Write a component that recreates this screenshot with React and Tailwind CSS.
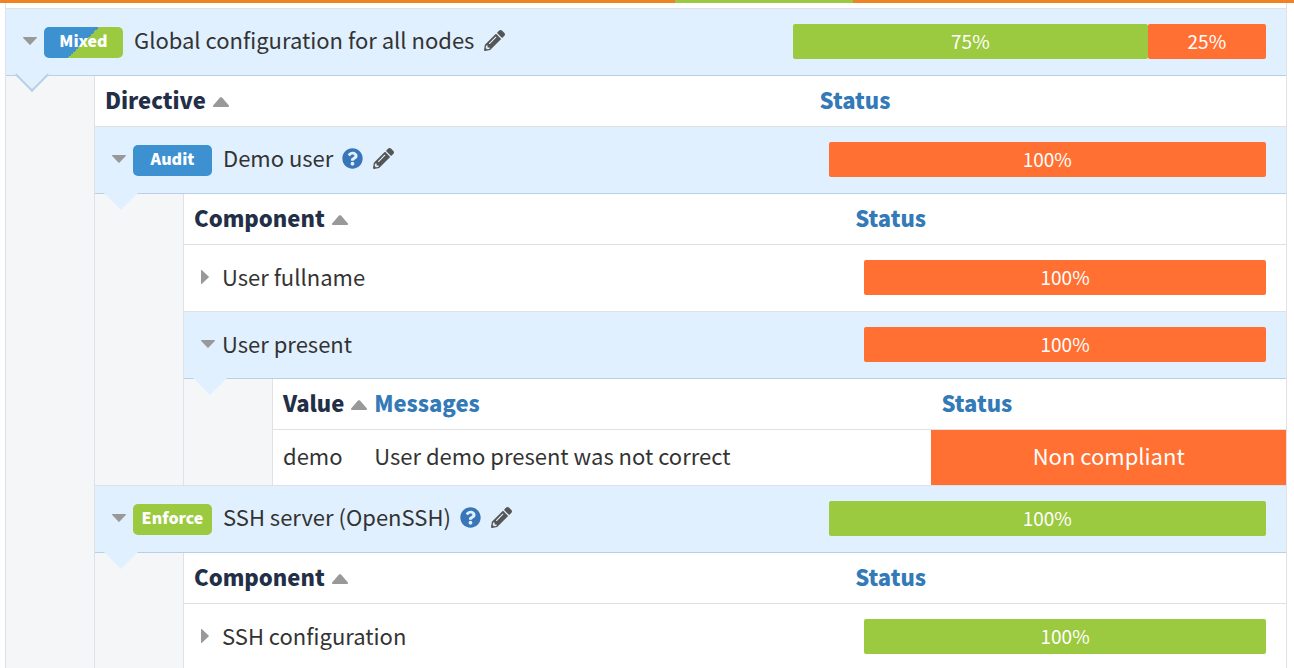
import { useState } from "react";
import { FaPencilAlt, FaQuestionCircle } from "react-icons/fa";

const POLICY_STYLES = {
  Mixed: "bg-[linear-gradient(135deg,#3d91d1_50%,#9bc93f_50%)]",
  Audit: "bg-[#3d91d1]",
  Enforce: "bg-[#9bc93f]",
};

const BAR_STYLES = {
  success: "bg-[#9bc93f]",
  error: "bg-[#ff7032]",
};

function Caret({ open }) {
  return open ? (
    <svg className="block h-2 w-[14px] fill-[#999]" viewBox="0 0 14 8" aria-hidden="true">
      <path d="M0.6 0h12.8c.6 0 .8.6.4 1L7.6 7.6c-.3.4-.9.4-1.2 0L.2 1C-.2.6 0 0 .6 0z" />
    </svg>
  ) : (
    <svg className="block h-[14px] w-2 fill-[#999]" viewBox="0 0 8 14" aria-hidden="true">
      <path d="M0 .6v12.8c0 .6.6.8 1 .4l6.6-6.2c.4-.3.4-.9 0-1.2L1 .2C.6-.2 0 0 0 .6z" />
    </svg>
  );
}

function SortIcon() {
  return (
    <svg className="mt-[6px] h-[10px] w-4 fill-[#999]" viewBox="0 0 16 10" aria-hidden="true">
      <path d="M1 10h14c.9 0 1.3-1 .7-1.7L9 .6C8.400 0 7.600 0 7 .6L.3 8.300C-.3 9 .1 10 1 10z" />
    </svg>
  );
}

function HeaderCell({ children, sorted, className = "" }) {
  return (
    <th
      scope="col"
      aria-sort={sorted ? "ascending" : undefined}
      className={`h-[50px] bg-white p-0 pb-1 pl-[10px] text-left align-middle ${className}`}
    >
      <button
        type="button"
        className={`flex items-center gap-[7px] whitespace-nowrap text-[22px] leading-[30px] font-black ${
          sorted ? "text-[#232f46]" : "text-[#337ab7]"
        }`}
      >
        {children}
        {sorted && <SortIcon />}
      </button>
    </th>
  );
}

function ComplianceBar({ parts }) {
  return (
    <div className="flex h-[35px] text-[19px] leading-[33px] text-white">
      {parts.map((part) => (
        <div
          key={part.kind}
          className={`rounded-xs text-center ${BAR_STYLES[part.kind]}`}
          style={{ width: `${part.value}%` }}
        >
          {part.value}%
        </div>
      ))}
    </div>
  );
}

function Row({ name, policy, help, editable, parts, level, defaultOpen = false, children }) {
  const [open, setOpen] = useState(defaultOpen);
  const cell = open
    ? "border-t border-b border-t-[#dfe1e4] border-b-[#b9cfe6] bg-[#e0f0ff]"
    : "border-t border-t-[#dfe1e4] bg-white";
  return (
    <>
      <tr>
        <td className={`relative p-0 align-top ${cell}`}>
          <div className="flex h-[66px] items-center pb-1 pl-[17px]">
            <button
              type="button"
              aria-expanded={open}
              aria-label={`Toggle ${name}`}
              onClick={() => setOpen(!open)}
              className="w-[21px] shrink-0 pt-[2px]"
            >
              <Caret open={open} />
            </button>
            {policy && (
              <span
                className={`mt-1 mr-[11px] h-[31px] w-[79px] shrink-0 rounded-[5px] text-center text-[16px] leading-[27px] font-black text-white ${POLICY_STYLES[policy]}`}
              >
                {policy}
              </span>
            )}
            <span className={`whitespace-nowrap ${policy ? "pb-[2px]" : ""}`}>{name}</span>
            {help && (
              <button type="button" aria-label={`About ${name}`} className="ml-[9px]">
                <FaQuestionCircle className="size-[21px] text-[#3876b8]" />
              </button>
            )}
            {editable && (
              <a href="#edit" aria-label={`Edit ${name}`} className="ml-[10px]">
                <FaPencilAlt className="size-[21px] text-[#555]" />
              </a>
            )}
          </div>
          {open && (
            <span
              className={`absolute -bottom-3 left-[14px] z-10 size-6 rotate-45 bg-[linear-gradient(135deg,transparent_50%,#e0f0ff_50%)] ${
                level === 1 ? "border-r-2 border-b-2 border-[#b9cfe6]" : ""
              }`}
            />
          )}
        </td>
        <td className={`pt-[15px] pr-5 pb-4 pl-[19px] align-top ${cell}`}>
          <ComplianceBar parts={parts} />
        </td>
      </tr>
      {open && children && (
        <tr>
          <td colSpan={2} className="p-0">
            <div className="flex">
              <div className="w-[88px] shrink-0 bg-[#f4f6f8]" />
              <div className="min-w-0 flex-1 border-l border-[#dfe1e4]">{children}</div>
            </div>
          </td>
        </tr>
      )}
    </>
  );
}

function ComplianceTable({ label, children }) {
  return (
    <table className="w-full table-fixed border-separate border-spacing-0">
      <thead>
        <tr>
          <HeaderCell sorted className="w-[60%]">{label}</HeaderCell>
          <HeaderCell className="w-[40%]">Status</HeaderCell>
        </tr>
      </thead>
      <tbody>{children}</tbody>
    </table>
  );
}

function ValuesTable() {
  const cell = "h-[56px] border-t border-[#dfe1e4] p-0 pb-[5px] align-middle";
  return (
    <table className="w-full table-fixed border-separate border-spacing-0">
      <thead>
        <tr>
          <HeaderCell sorted className="w-[9%]">Value</HeaderCell>
          <HeaderCell className="w-[56%]">Messages</HeaderCell>
          <HeaderCell className="w-[35%]">Status</HeaderCell>
        </tr>
      </thead>
      <tbody>
        <tr>
          <td className={`pl-[10px] ${cell}`}>demo</td>
          <td className={`pl-[10px] ${cell}`}>User demo present was not correct</td>
          <td className={`bg-[#ff7032] text-center text-white ${cell}`}>Non compliant</td>
        </tr>
      </tbody>
    </table>
  );
}

export default function App() {
  const failed = [{ kind: "error", value: 100 }];
  const passed = [{ kind: "success", value: 100 }];
  return (
    <div className="h-screen overflow-hidden bg-white font-['Noto_Sans_CJK_SC',sans-serif] text-[22px] leading-[30px] text-[#333]">
      <div className="flex h-[3px] bg-[#f08223]">
        <div className="ml-[52.2%] w-[13.7%] bg-[#9bc93f]" />
      </div>
      <main className="mr-[7px] ml-[5px] border-x border-[#dfe1e4] pt-[5px]">
        <table className="w-full table-fixed border-separate border-spacing-0">
          <colgroup>
            <col className="w-[60%]" />
            <col className="w-[40%]" />
          </colgroup>
          <tbody>
            <Row
              name="Global configuration for all nodes"
              policy="Mixed"
              editable
              level={1}
              defaultOpen
              parts={[
                { kind: "success", value: 75 },
                { kind: "error", value: 25 },
              ]}
            >
              <ComplianceTable label="Directive">
                <Row name="Demo user" policy="Audit" help editable level={2} defaultOpen parts={failed}>
                  <ComplianceTable label="Component">
                    <Row name="User fullname" level={3} parts={failed} />
                    <Row name="User present" level={3} defaultOpen parts={failed}>
                      <ValuesTable />
                    </Row>
                  </ComplianceTable>
                </Row>
                <Row name="SSH server (OpenSSH)" policy="Enforce" help editable level={2} defaultOpen parts={passed}>
                  <ComplianceTable label="Component">
                    <Row name="SSH configuration" level={3} parts={passed} />
                  </ComplianceTable>
                </Row>
              </ComplianceTable>
            </Row>
          </tbody>
        </table>
      </main>
    </div>
  );
}
